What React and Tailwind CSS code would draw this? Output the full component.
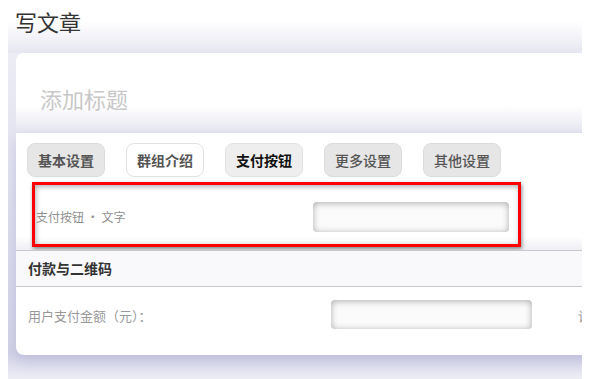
import React from "react";

const tabs = [
  { t: "基本设置", cls: "bg-[#e6e6e6] border-[#dcdcdc] text-[#555] font-semibold" },
  { t: "群组介绍", cls: "bg-white border-[#e2e2e2] text-[#555] font-semibold" },
  { t: "支付按钮", cls: "bg-[#eeeeee] border-[#e2e2e2] text-[#111] font-bold" },
  { t: "更多设置", cls: "bg-[#e6e6e6] border-[#dcdcdc] text-[#555] font-medium" },
  { t: "其他设置", cls: "bg-[#e6e6e6] border-[#dcdcdc] text-[#555] font-medium" },
];

function Field({ w, h }) {
  return (
    <div
      className={`${w} ${h} shrink-0 rounded-[4px] bg-[#fbfbfb] shadow-[inset_0_1px_7px_rgba(0,0,0,0.32)]`}
    />
  );
}

export default function App() {
  return (
    <div className="w-[600px] h-[379px] bg-white overflow-hidden font-['Noto_Sans_CJK_SC',sans-serif]">
      <div className="ml-[8px] w-[574px] h-[379px] overflow-hidden flex flex-col">
        <div className="h-[53px] shrink-0 pl-[7px] pt-[5px] bg-[linear-gradient(to_bottom,#ffffff_40%,#e6e6f1_100%)]">
          <div className="text-[22px] leading-[32px] text-[#333]">写文章</div>
        </div>
        <div className="flex-1 pl-[8px] bg-[linear-gradient(to_bottom,#ececf5_0%,#d2d2e7_92%,#eeeef6_100%)]">
          <div className="w-[600px] h-[80px] rounded-tl-[8px] pl-[24px] pt-[29px] bg-[linear-gradient(to_bottom,#ffffff_66%,#e5e5f0_100%)]">
            <div className="text-[22px] leading-[32px] text-[#c8c8c8]">添加标题</div>
          </div>
          <div className="w-[600px] rounded-bl-[8px] bg-white shadow-[0_6px_14px_rgba(150,150,200,0.35)]">
            <div className="flex gap-[21px] pl-[11px] pt-[10px]">
              {tabs.map((b) => (
                <div
                  key={b.t}
                  className={`w-[78px] h-[34px] shrink-0 rounded-[8px] border flex items-center justify-center text-[14px] ${b.cls}`}
                >
                  {b.t}
                </div>
              ))}
            </div>
            <div className="pt-[5px] pb-[3px] bg-[linear-gradient(to_bottom,#ffffff_82%,#eeeef5_100%)]">
              <div className="ml-[16px] w-[489px] h-[65px] border-[3px] border-[#ff0000] flex items-center pt-[5px] shadow-[1px_2px_4px_rgba(0,0,0,0.45),inset_1px_2px_5px_rgba(0,0,0,0.3)]">
                <div className="w-[278px] shrink-0 pl-[1px] text-[12px] text-[#8f8f8f]">支付按钮 · 文字</div>
                <Field w="w-[196px]" h="h-[30px]" />
              </div>
            </div>
            <div className="h-[37px] border-y border-[#c9c9c9] bg-[#f9f9fb] flex items-center pl-[12px]">
              <span className="text-[14px] font-bold text-[#333]">付款与二维码</span>
            </div>
            <div className="h-[68px] flex items-start pt-[13px]">
              <div className="w-[315px] shrink-0 pl-[12px] h-[29px] flex items-center pt-[3px] text-[13px] text-[#999] whitespace-nowrap">
                用户支付金额（元）：
              </div>
              <Field w="w-[201px]" h="h-[29px]" />
              <div className="ml-[46px] shrink-0 h-[29px] flex items-center pt-[3px] text-[13px] text-[#999] whitespace-nowrap">
                说明
              </div>
            </div>
          </div>
        </div>
      </div>
    </div>
  );
}
